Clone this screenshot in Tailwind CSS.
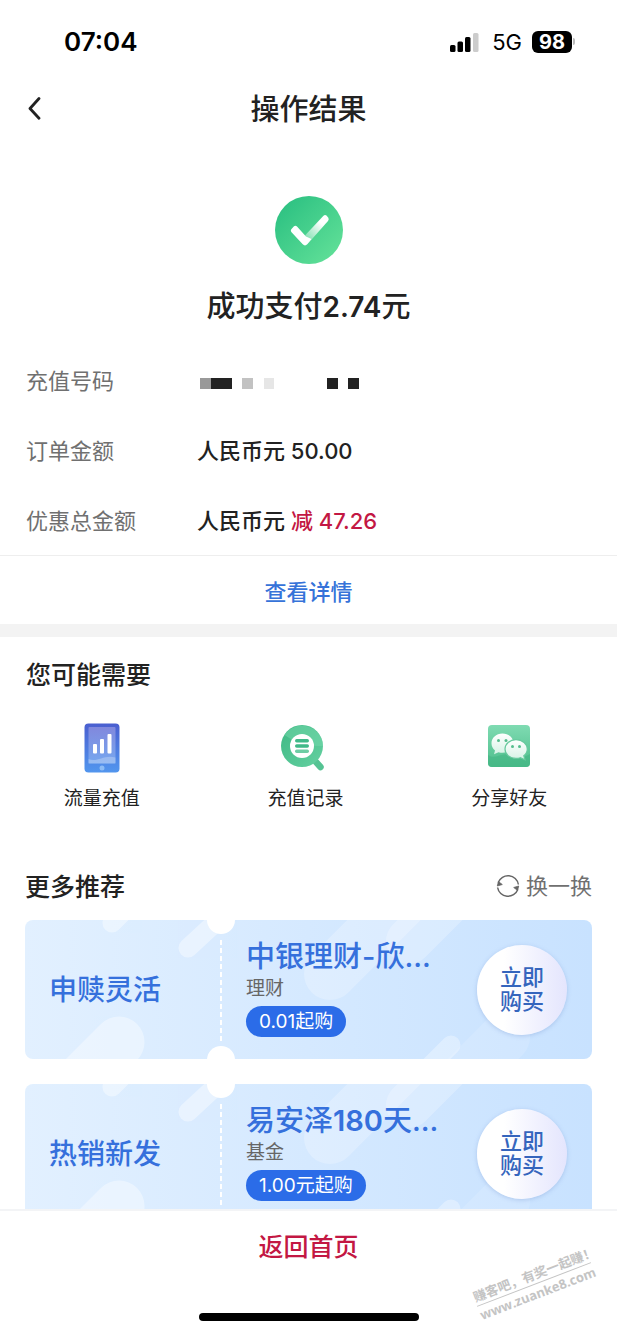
<!DOCTYPE html>
<html lang="zh-CN">
<head>
<meta charset="utf-8">
<meta name="viewport" content="width=device-width, initial-scale=1">
<title>操作结果</title>
<script src="https://cdn.jsdelivr.net/npm/@tailwindcss/browser@4"></script>
</head>
<body class="relative flex h-screen flex-col overflow-hidden bg-white font-['Inter','Noto_Sans_CJK_SC',sans-serif] text-[#222]">

<!-- Status bar -->
<div class="flex h-20 shrink-0 items-center justify-between pl-16 pr-[42px] pt-[3px] text-black">
  <span class="text-[26px] font-semibold leading-8">07:04</span>
  <div class="flex items-center gap-[10px]">
    <svg class="h-5 w-8" viewBox="0 0 32 20" aria-hidden="true">
      <rect x="0" y="13" width="5.500" height="7" rx="1.500"/>
      <rect x="7.500" y="9.500" width="5.500" height="10.500" rx="1.500"/>
      <rect x="15" y="5" width="5.500" height="15" rx="1.500"/>
      <rect x="23" y="1" width="5.500" height="19" rx="1.500" fill="#ccc"/>
    </svg>
    <span class="text-[22px] leading-6">5G</span>
    <div class="flex items-center">
      <span class="flex h-[22px] w-10 items-center justify-center rounded-[6px] bg-black text-[20px] font-bold leading-5 text-white">98</span>
      <span class="ml-px h-[7px] w-[2px] rounded-r-full bg-[#bbb]"></span>
    </div>
  </div>
</div>

<!-- Title bar -->
<header class="grid h-[58px] shrink-0 grid-cols-[64px_1fr_64px] items-center">
  <button type="button" aria-label="返回" class="flex h-full items-center pl-6">
    <svg class="h-6 w-5" viewBox="0 0 20 24" fill="none" stroke="#222" stroke-width="2.800" stroke-linecap="round" stroke-linejoin="round" aria-hidden="true"><path d="M15 1.500 6 11.500l9 9.800"/></svg>
  </button>
  <h1 class="pt-[2px] text-center text-[29px] font-medium leading-9">操作结果</h1>
</header>

<main class="flex-1 overflow-y-auto [scrollbar-width:none]">
  <section class="pt-[57px]">
    <div class="flex flex-col items-center gap-6">
      <svg class="size-[70px]" viewBox="0 0 70 70" aria-hidden="true">
        <defs>
          <linearGradient id="okBg" x1="0" y1="0" x2="1" y2="1"><stop offset=".1" stop-color="#2dc182"/><stop offset="1" stop-color="#66e39a"/></linearGradient>
          <linearGradient id="okArm" gradientUnits="userSpaceOnUse" x1="33" y1="43" x2="47" y2="28"><stop offset="0" stop-color="#fff" stop-opacity=".35"/><stop offset="1" stop-color="#fff"/></linearGradient>
        </defs>
        <circle cx="35" cy="35" r="34" fill="url(#okBg)"/>
        <path d="M31 40.500 49.500 20.700Q51 19.300 52.700 20.700L54.300 22.700Q55.300 24.300 54 26L34.500 48Z" fill="url(#okArm)"/>
        <path d="M17.300 34.300 20 31.300Q21.500 30 23 31.500L32 41.500 37.500 44 33.500 49Q31 51.800 28.500 49L17.300 37Q16.300 35.600 17.300 34.300Z" fill="#fff"/>
      </svg>
      <p class="text-[29px] font-medium leading-9">成功支付<span class="text-[28px] font-semibold">2.74</span>元</p>
    </div>

    <dl class="mt-10 grid grid-cols-[171px_1fr] gap-y-[38px] px-[26px] text-[22px] leading-8">
      <dt class="text-[#707070]">充值号码</dt>
      <dd class="flex items-center pl-[3px] pt-1" aria-label="号码已隐藏">
        <svg class="h-[11px] w-40" viewBox="0 0 160 11" shape-rendering="crispEdges" aria-hidden="true">
          <path fill="#999" d="M0 0h11v11H0z"/><path fill="#222" d="M11 0h21v11H11zM127 0h11v11h-11zM148 0h11v11h-11z"/><path fill="#c2c2c2" d="M42 0h11v11H42z"/><path fill="#e6e6e6" d="M64 0h10v11H64z"/>
        </svg>
      </dd>
      <dt class="text-[#707070]">订单金额</dt>
      <dd class="font-medium">人民币元 50.00</dd>
      <dt class="text-[#707070]">优惠总金额</dt>
      <dd class="font-medium">人民币元 <span class="text-[#c31743]">减 47.26</span></dd>
    </dl>

    <a href="#detail" class="mt-[18px] flex h-[69px] items-center justify-center border-t border-[#eee] pt-1 text-[22px] font-medium leading-8 text-[#3673d9]">查看详情</a>
  </section>

  <section class="border-t-[13px] border-[#f3f3f3] pt-5">
    <h2 class="px-[26px] text-[25px] font-medium leading-9">您可能需要</h2>
    <nav class="mt-7 grid grid-cols-3 pr-[6px] text-[19px] leading-7">
      <a href="#data" class="flex flex-col items-center gap-[10px]">
        <svg class="size-[54px]" viewBox="0 0 54 54" aria-hidden="true">
          <defs>
            <linearGradient id="phBg" x1="0" y1="0" x2="0" y2="1"><stop offset="0" stop-color="#4a5fd0"/><stop offset="1" stop-color="#5296ee"/></linearGradient>
            <linearGradient id="phScr" x1="0" y1="0" x2="0" y2="1"><stop offset="0" stop-color="#8188dd"/><stop offset="1" stop-color="#76a7ef"/></linearGradient>
          </defs>
          <rect x="9.500" y="2.500" width="35" height="49" rx="4" fill="url(#phBg)"/>
          <rect x="13.500" y="6" width="27" height="36.500" rx="1" fill="url(#phScr)"/>
          <path d="M13.500 38C22 42 29 33 40.500 36.500V42.500H13.500Z" fill="#fff" opacity=".25"/>
          <rect x="18" y="23" width="4" height="9.500" rx="1" fill="#fff"/><rect x="25" y="18" width="4" height="14.500" rx="1" fill="#fff"/><rect x="32.500" y="13" width="4" height="19.500" rx="1" fill="#fff"/>
          <circle cx="27" cy="47" r="2.500" fill="#8cbcf6"/>
        </svg>
        流量充值
      </a>
      <a href="#records" class="flex flex-col items-center gap-[10px]">
        <svg class="size-[54px]" viewBox="0 0 54 54" aria-hidden="true">
          <defs><linearGradient id="mgBg" x1="0" y1="0" x2="1" y2="1"><stop offset="0" stop-color="#3eb884"/><stop offset="1" stop-color="#65d1a1"/></linearGradient></defs>
          <path d="m38 41 4.500 5" stroke="#55c393" stroke-width="6.500" stroke-linecap="round"/>
          <circle cx="24" cy="25" r="21" fill="url(#mgBg)"/>
          <path d="M6.500 14A21 21 0 0 1 45 25C34 25 20 24 6.500 14Z" fill="#7bdcb0" opacity=".45"/>
          <circle cx="24" cy="25" r="12" fill="#fff"/>
          <rect x="17" y="18" width="14" height="3.500" rx="1.700" fill="#3fb988"/><rect x="17" y="23.300" width="14" height="3.500" rx="1.700" fill="#3fb988"/><rect x="17" y="28.500" width="14" height="3.500" rx="1.700" fill="#6dcda4"/>
        </svg>
        充值记录
      </a>
      <a href="#share" class="flex flex-col items-center gap-[10px]">
        <svg class="size-[54px]" viewBox="0 0 54 54" aria-hidden="true">
          <defs>
            <linearGradient id="wxBg" x1="0" y1="0" x2="0" y2="1"><stop offset="0" stop-color="#7fdbb2"/><stop offset="1" stop-color="#4dbd8b"/></linearGradient>
            <linearGradient id="wxBub" x1="0" y1="0" x2="0" y2="1"><stop offset="0" stop-color="#fff"/><stop offset="1" stop-color="#d5f2e5"/></linearGradient>
          </defs>
          <rect x="6" y="4" width="42" height="42" rx="4" fill="url(#wxBg)"/>
          <path d="M6 34C14 40 20 29 30 35C37 39 42 36 48 33V42Q48 46 44 46H10Q6 46 6 42Z" fill="#42b683" opacity=".6"/>
          <path d="M20.500 12.500C14 12.500 9.500 17 9.500 22.300C9.500 25.300 10.800 27.800 13 29.500L12 33.300 16.500 31.300C17.800 31.700 19 31.800 20.500 31.800C27 31.800 31.500 27.500 31.500 22.300C31.500 17 27 12.500 20.500 12.500Z" fill="url(#wxBub)"/>
          <path d="M34 18.700C27.700 18.700 23 22.900 23 28C23 33.200 27.700 37.400 34 37.400C35.500 37.400 37 37.200 38.300 36.700L43 38.700 41.800 34.800C44 33.200 45.300 30.800 45.300 28C45.300 22.900 40.500 18.700 34 18.700Z" fill="url(#wxBub)" stroke="#66c99d" stroke-width="1.200"/>
          <g fill="#55bd8d"><circle cx="16.500" cy="19.500" r="1.500"/><circle cx="24" cy="19.500" r="1.500"/><circle cx="30.500" cy="25.500" r="1.500"/><circle cx="37.500" cy="25.500" r="1.500"/></g>
        </svg>
        分享好友
      </a>
    </nav>
  </section>

  <section class="px-[25px] pt-14">
    <div class="flex items-center justify-between">
      <h2 class="text-[25px] font-medium leading-9">更多推荐</h2>
      <button type="button" class="flex items-center gap-[6px] pb-[2px] text-[22px] leading-8 text-[#707070]">
        <svg class="size-6" viewBox="0 0 24 24" fill="none" stroke="#666" stroke-width="1.500" aria-hidden="true">
          <path d="M2.200 8.500A10.500 10.500 0 0 1 22.400 10.500M21.800 15.500A10.500 10.500 0 0 1 1.600 13.500"/>
          <path d="M1.300 12 2.400 7.600 6.300 10.500ZM22.700 12 21.600 16.400 17.700 13.500Z" fill="#666" stroke-width=".8"/>
        </svg>
        换一换
      </button>
    </div>

    <svg class="absolute size-0" aria-hidden="true">
      <defs>
        <symbol id="shapes" viewBox="0 0 567 139">
          <g stroke="#fff" stroke-linecap="round">
            <path d="M87 3 107-17" stroke-width="19" opacity=".4"/>
            <path d="M163 28 203-9" stroke-width="19" opacity=".4"/>
            <path d="M94 122 20 196" stroke-width="51" opacity=".38"/>
            <path d="M305 54 400-41" stroke-width="52" opacity=".24"/>
            <path d="M384 21 440-35" stroke-width="46" opacity=".24"/>
            <path d="M426 125 395 156" stroke-width="19" opacity=".32"/>
            <path d="M480 117 430 167" stroke-width="50" opacity=".13"/>
          </g>
        </symbol>
      </defs>
    </svg>

    <ul class="mt-[15px] flex flex-col gap-[25px]">
      <li class="relative isolate grid h-[139px] grid-cols-[196px_1fr_90px] items-center overflow-hidden rounded-lg bg-linear-to-r from-[#e2f0ff] to-[#c8e2ff] pr-[25px]">
        <svg class="absolute inset-0 -z-10 size-full" aria-hidden="true"><use href="#shapes"/></svg>
        <span class="absolute -top-[14px] left-[182px] size-7 rounded-full bg-white"></span>
        <span class="absolute -bottom-[15px] left-[182px] size-7 rounded-full bg-white"></span>
        <svg class="absolute left-[195px] top-5 h-[102px] w-[2px]" aria-hidden="true"><path d="M1 0V102" stroke="#fff" stroke-width="2" stroke-dasharray="5 3"/></svg>
        <strong class="pl-6 text-[28px] font-medium leading-9 text-[#3570dc]">申赎灵活</strong>
        <div class="flex min-w-0 flex-col items-start pb-[3px] pl-[25px]">
          <h3 class="w-full max-w-[225px] truncate text-[29px] font-medium leading-9 text-[#3570dc]">中银理财-欣...</h3>
          <p class="text-[19px] leading-7 text-[#666]">理财</p>
          <p class="mt-[3px] rounded-full bg-[#2b6ce8] px-[13px] text-[19px] leading-[31px] text-white">0.01起购</p>
        </div>
        <button type="button" class="flex size-[90px] items-center justify-center rounded-full bg-linear-to-r from-white from-30% to-[#e4e5fd] pb-[2px] text-[22px] font-medium leading-6 text-[#3565bd] shadow-[0_1px_4px_rgba(110,140,200,0.35)]"><span>立即<br>购买</span></button>
      </li>
      <li class="relative isolate grid h-[139px] grid-cols-[196px_1fr_90px] items-center overflow-hidden rounded-lg bg-linear-to-r from-[#e2f0ff] to-[#c8e2ff] pr-[25px]">
        <svg class="absolute inset-0 -z-10 size-full" aria-hidden="true"><use href="#shapes"/></svg>
        <span class="absolute -top-[14px] left-[182px] size-7 rounded-full bg-white"></span>
        <span class="absolute -bottom-[15px] left-[182px] size-7 rounded-full bg-white"></span>
        <svg class="absolute left-[195px] top-5 h-[102px] w-[2px]" aria-hidden="true"><path d="M1 0V102" stroke="#fff" stroke-width="2" stroke-dasharray="5 3"/></svg>
        <strong class="pl-6 text-[28px] font-medium leading-9 text-[#3570dc]">热销新发</strong>
        <div class="flex min-w-0 flex-col items-start pb-[3px] pl-[25px]">
          <h3 class="w-full max-w-[225px] truncate text-[29px] font-medium leading-9 text-[#3570dc]">易安泽<span class="font-semibold">180</span>天...</h3>
          <p class="text-[19px] leading-7 text-[#666]">基金</p>
          <p class="mt-[3px] rounded-full bg-[#2b6ce8] px-[13px] text-[19px] leading-[31px] text-white">1.00元起购</p>
        </div>
        <button type="button" class="flex size-[90px] items-center justify-center rounded-full bg-linear-to-r from-white from-30% to-[#e4e5fd] pb-[2px] text-[22px] font-medium leading-6 text-[#3565bd] shadow-[0_1px_4px_rgba(110,140,200,0.35)]"><span>立即<br>购买</span></button>
      </li>
    </ul>
  </section>
</main>

<!-- Bottom action -->
<footer class="flex h-[125px] shrink-0 flex-col items-center justify-between border-t-2 border-[#f3f4f6] bg-white pb-[13px]">
  <button type="button" class="flex h-[72px] w-full items-center justify-center text-[25px] font-medium leading-9 text-[#c31743]">返回首页</button>
  <span class="h-2 w-[220px] rounded-full bg-black"></span>
</footer>

<!-- Watermark -->
<div class="pointer-events-none absolute bottom-[31px] right-[22px] w-[122px] -rotate-[21deg] whitespace-nowrap font-bold text-[#c4c4c4]">
  <p class="border-b border-[#c4c4c4] text-[13px] leading-[18px]">赚客吧，有奖一起赚！</p>
  <p class="font-['Open_Sans',sans-serif] text-[13px] leading-[18px]">www.zuanke8.com</p>
</div>
</body>
</html>
